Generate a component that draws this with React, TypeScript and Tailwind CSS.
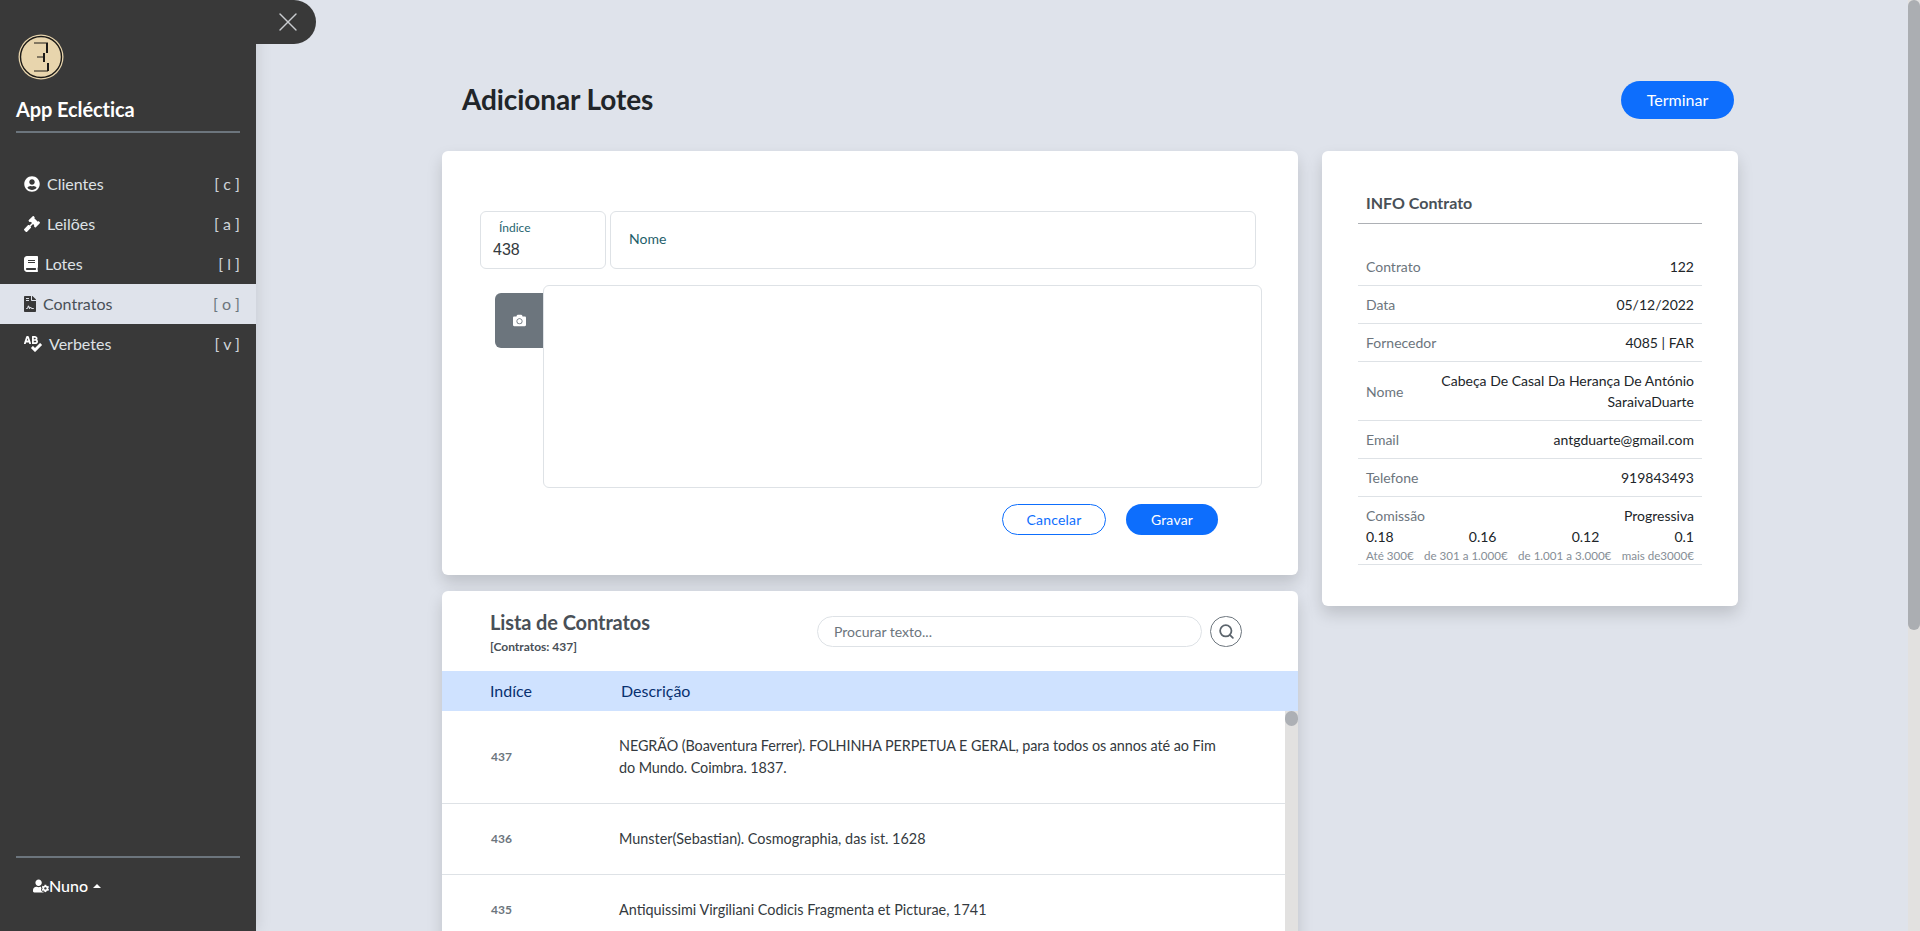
import { FaBook, FaCamera, FaFileContract, FaGavel, FaSpellCheck, FaUserCircle, FaUserCog } from 'react-icons/fa';
import { Search, X } from 'lucide-react';

const menu = [
  { label: 'Clientes', key: 'c', icon: <FaUserCircle className="h-4 w-4" /> },
  { label: 'Leilões', key: 'a', icon: <FaGavel className="h-4 w-4" /> },
  { label: 'Lotes', key: 'l', icon: <FaBook className="h-4 w-[14px]" /> },
  { label: 'Contratos', key: 'o', icon: <FaFileContract className="h-4 w-3" />, active: true },
  { label: 'Verbetes', key: 'v', icon: <FaSpellCheck className="h-4 w-[18px]" /> },
];

const info = [
  { label: 'Contrato', value: '122' },
  { label: 'Data', value: '05/12/2022' },
  { label: 'Fornecedor', value: '4085 | FAR' },
  { label: 'Nome', value: 'Cabeça De Casal Da Herança De António SaraivaDuarte' },
  { label: 'Email', value: 'antgduarte@gmail.com' },
  { label: 'Telefone', value: '919843493' },
];

const rates = ['0.18', '0.16', '0.12', '0.1'];
const ranges = ['Até 300€', 'de 301 a 1.000€', 'de 1.001 a 3.000€', 'mais de3000€'];

const rows = [
  { id: '437', text: 'NEGRÃO (Boaventura Ferrer). FOLHINHA PERPETUA E GERAL, para todos os annos até ao Fim do Mundo. Coimbra. 1837.', className: 'h-[93px] tracking-[-0.08px]' },
  { id: '436', text: 'Munster(Sebastian). Cosmographia, das ist. 1628', className: 'h-[71px]' },
  { id: '435', text: 'Antiquissimi Virgiliani Codicis Fragmenta et Picturae, 1741', className: 'h-[71px]' },
];

function Logo() {
  return (
    <svg width="46" height="46" viewBox="0 0 46 46">
      <circle cx="23" cy="23" r="22.5" fill="#e8d5ad" />
      <circle cx="23" cy="23" r="20.5" fill="#e8d5ad" stroke="#1c1a17" strokeWidth="1.4" />
      <path d="M16 9h14M19 23h8M16 37h14" fill="none" stroke="#1c1a17" strokeWidth="1" />
      <path d="M29 9v10M26 19v9M30 29v8" fill="none" stroke="#1c1a17" strokeWidth="2" />
    </svg>
  );
}

function Sidebar() {
  return (
    <aside className="relative flex h-full w-64 shrink-0 flex-col bg-[#393939] shadow-[0_0_16px_rgba(0,0,0,0.12)]">
      <div className="absolute top-0 left-[250px] flex h-11 w-[66px] items-center justify-end rounded-r-[22px] bg-[#393939] pr-[12px] text-[#c9ccd0]">
        <X size={32} strokeWidth={1} />
      </div>
      <div className="pt-[34px] pl-[18px]">
        <Logo />
      </div>
      <div className="mx-4 mt-[17px] border-b-2 border-[#6c757d] pb-[10px] text-[20px] leading-[24px] font-bold tracking-[-0.1px] text-white">
        App Ecléctica
      </div>
      <nav className="mt-[31px]">
        {menu.map((item) => (
          <div
            key={item.label}
            className={`flex h-10 items-center justify-between pr-4 pl-6 text-[16px] ${item.active ? 'bg-[#dfe3eb]' : ''}`}
          >
            <span className={`flex items-center gap-[7px] ${item.active ? 'text-[#393939]' : 'text-white'}`}>
              {item.icon}
              <span className={item.active ? 'text-[#495057]' : 'text-[#dee2e6]'}>{item.label}</span>
            </span>
            <span className={item.active ? 'text-[#6c757d]' : 'text-[#ced4da]'}>[ {item.key} ]</span>
          </div>
        ))}
      </nav>
      <div className="mx-4 mt-auto mb-[35px] border-t-2 border-[#6c757d] pt-[18px]">
        <div className="flex items-center pl-[17px] text-[16px] leading-[20px] font-medium text-white">
          <FaUserCog size={16} />
          <span>Nuno</span>
          <span className="ml-[5px] h-0 w-0 border-x-[4px] border-b-[4px] border-x-transparent border-b-white" />
        </div>
      </div>
    </aside>
  );
}

function AddCard() {
  return (
    <section className="h-[424px] rounded-md bg-white pt-[60px] pl-[38px] shadow-[0_8px_16px_rgba(0,0,0,0.15)]">
      <div className="flex gap-1">
        <div className="h-[58px] w-[126px] rounded-md border border-[#dee2e6] pt-[8px] pl-3">
          <div className="pl-[6px] text-[12px] leading-[16px] text-[#1f6470]">Índice</div>
          <div className="font-['Liberation_Sans'] text-[16px] leading-[28px] text-[#343a40]">438</div>
        </div>
        <div className="flex h-[58px] w-[646px] items-center rounded-md border border-[#dee2e6] pb-1 pl-[18px] text-[14px] text-[#1f5f6b]">
          Nome
        </div>
      </div>
      <div className="mt-4 flex items-start pl-[15px]">
        <div className="mt-2 flex h-[55px] w-12 items-center justify-center rounded-l-md bg-[#6c757d] text-white">
          <FaCamera size={13} />
        </div>
        <div className="h-[203px] w-[719px] rounded-md border border-[#dee2e6]" />
      </div>
      <div className="mt-4 flex gap-5 pl-[522px] text-[14px] tracking-[0.2px]">
        <button className="h-[31px] w-[104px] rounded-full border border-[#0d6efd] text-[#0d6efd]">Cancelar</button>
        <button className="h-[31px] w-[92px] rounded-full bg-[#0d6efd] text-white">Gravar</button>
      </div>
    </section>
  );
}

function ListCard() {
  return (
    <section className="mt-4 h-[420px] rounded-t-md bg-white shadow-[0_8px_16px_rgba(0,0,0,0.15)]">
      <div className="flex h-20 items-start pt-[19px] pl-12">
        <div className="w-[327px]">
          <div className="text-[20px] leading-[24px] font-bold tracking-[-0.1px] text-[#495057]">Lista de Contratos</div>
          <div className="mt-[5px] text-[12px] leading-[16px] font-bold text-[#495057]">[Contratos: 437]</div>
        </div>
        <div className="mt-[6px] flex h-[31px] w-[385px] items-center rounded-full border border-[#dee2e6] pl-4 text-[14px] text-[#6c757d]">
          Procurar texto...
        </div>
        <div className="mt-[6px] ml-2 flex h-[31px] w-8 items-center justify-center rounded-full border border-[#6c757d] text-[#5c656d]">
          <Search size={17} strokeWidth={2.5} />
        </div>
      </div>
      <div className="flex h-10 items-center bg-[#cfe2ff] pl-12 text-[16px] text-[#08306f]">
        <span className="w-[131px]">Indíce</span>
        <span>Descrição</span>
      </div>
      <div className="flex">
        <div className="w-[843px]">
          {rows.map((row) => (
            <div key={row.id} className={`flex items-center border-b border-[#dee2e6] pl-[49px] ${row.className}`}>
              <span className="w-[128px] text-[12px] font-bold tracking-normal text-[#6c757d]">{row.id}</span>
              <span className="w-[610px] text-[14.4px] leading-[22px] text-[#343a40]">{row.text}</span>
            </div>
          ))}
        </div>
        <div className="h-[300px] w-[13px] bg-[#e2e1e0]">
          <div className="h-[15px] w-[13px] rounded-full bg-[#adb0b5]" />
        </div>
      </div>
    </section>
  );
}

function InfoCard() {
  return (
    <aside className="h-[455px] rounded-md bg-white px-9 pt-[40px] shadow-[0_8px_16px_rgba(0,0,0,0.15)]">
      <div className="border-b border-[#adb0b5] pb-[8px] pl-2 text-[16px] leading-[24px] font-bold text-[#495057]">
        INFO Contrato
      </div>
      <div className="mt-[24px] text-[14px]">
        {info.map((row) => (
          <div key={row.label} className="flex items-center justify-between border-b border-[#dee2e6] px-2 py-[8px] leading-[21px]">
            <span className="shrink-0 text-[#6c757d]">{row.label}</span>
            <span className="w-[270px] text-right leading-[21px] text-[#212529]">{row.value}</span>
          </div>
        ))}
        <div className="border-b border-[#dee2e6] px-2 pt-[8px]">
          <div className="flex justify-between leading-[21px]">
            <span className="text-[#6c757d]">Comissão</span>
            <span className="text-[#212529]">Progressiva</span>
          </div>
          <div className="flex justify-between leading-[21px] text-[#212529]">
            {rates.map((rate) => (
              <span key={rate}>{rate}</span>
            ))}
          </div>
          <div className="flex justify-between text-[11.6px] leading-[17px] text-[#868e96]">
            {ranges.map((range) => (
              <span key={range}>{range}</span>
            ))}
          </div>
        </div>
      </div>
    </aside>
  );
}

export default function App() {
  return (
    <div className="flex h-[931px] overflow-hidden bg-[#dfe3eb] font-['Lato','Liberation_Sans',sans-serif]">
      <Sidebar />
      <main className="min-w-0 flex-1 pl-[186px]">
        <div className="flex h-[151px] w-[1296px] items-start justify-between pt-[81px] pr-[4px] pl-5">
          <h1 className="text-[28px] leading-[36px] font-bold tracking-[-0.1px] text-[#212529]">Adicionar Lotes</h1>
          <button className="h-[38px] w-[113px] rounded-full bg-[#0d6efd] text-[16px] text-white">Terminar</button>
        </div>
        <div className="grid w-[1296px] grid-cols-[856px_416px] gap-x-6">
          <div>
            <AddCard />
            <ListCard />
          </div>
          <InfoCard />
        </div>
      </main>
      <div className="h-full w-3 shrink-0 bg-[#e2e1e0]">
        <div className="h-[630px] rounded-full bg-[#abaeb2]" />
      </div>
    </div>
  );
}
